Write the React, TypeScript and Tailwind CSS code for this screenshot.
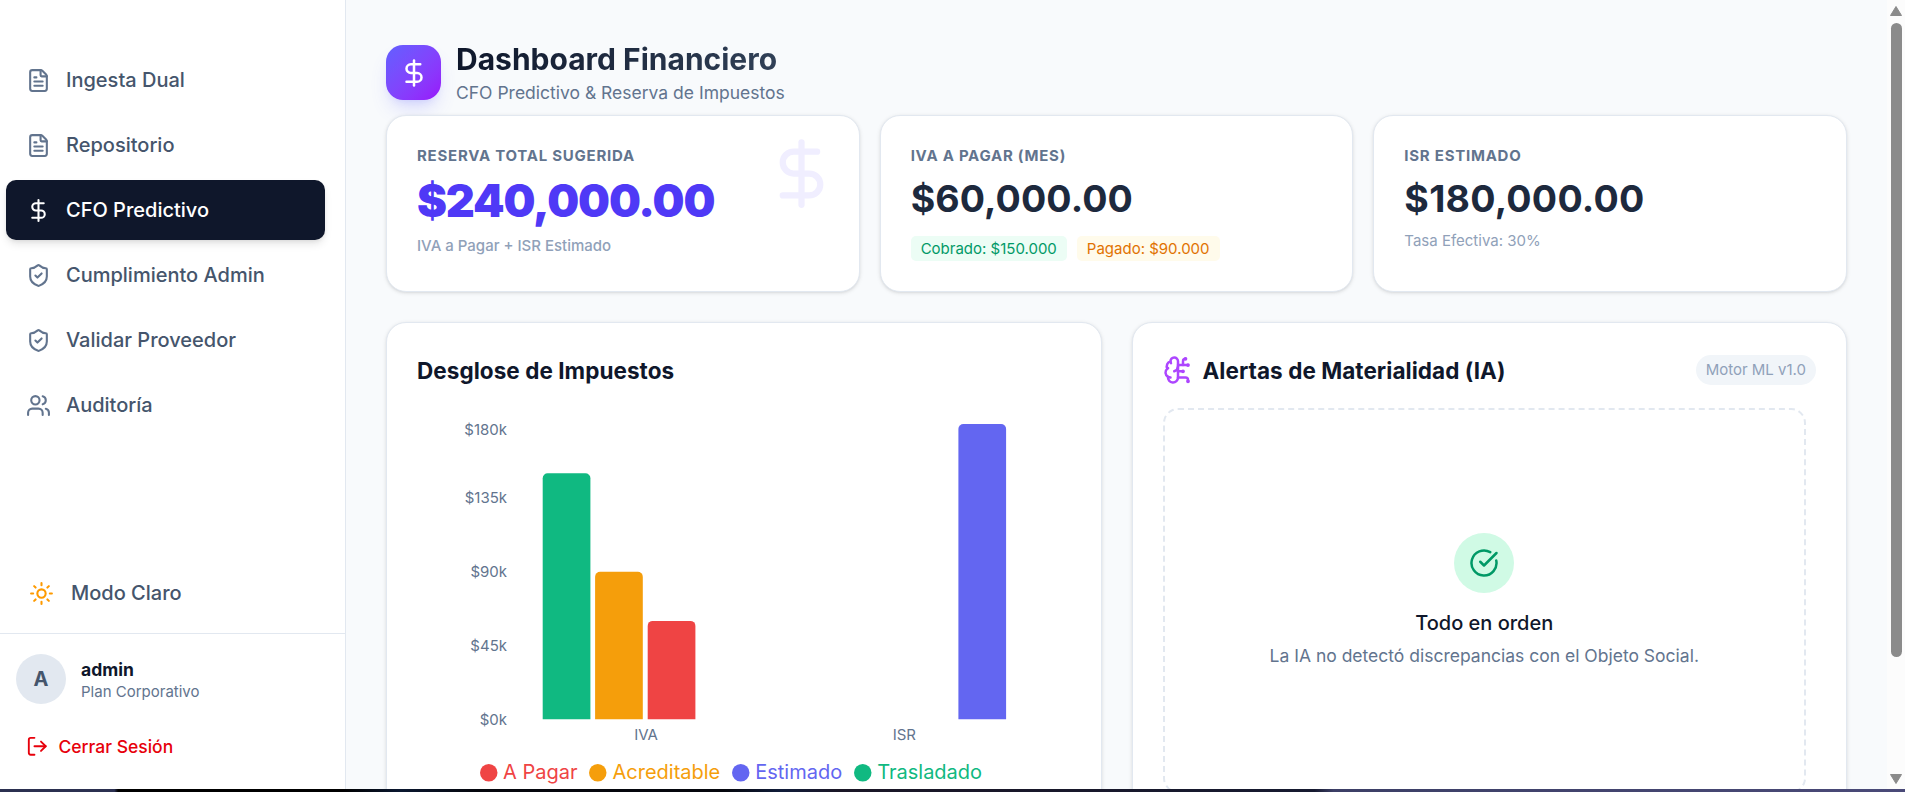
import React from "react";
import {
  BrainCircuit,
  CircleCheckBig,
  DollarSign,
  FileText,
  LogOut,
  ShieldCheck,
  Sun,
  Users,
} from "lucide-react";

const navItems = [
  { label: "Ingesta Dual", icon: FileText, active: false },
  { label: "Repositorio", icon: FileText, active: false },
  { label: "CFO Predictivo", icon: DollarSign, active: true },
  { label: "Cumplimiento Admin", icon: ShieldCheck, active: false },
  { label: "Validar Proveedor", icon: ShieldCheck, active: false },
  { label: "Auditoría", icon: Users, active: false },
];

const bars = [
  { x: 125.7, value: 150, color: "#10b981" },
  { x: 178.1, value: 90, color: "#f59e0b" },
  { x: 230.7, value: 60, color: "#ef4444" },
  { x: 541.4, value: 180, color: "#6366f1" },
];

const yTicks = [
  { label: "$180k", y: 26 },
  { label: "$135k", y: 94 },
  { label: "$90k", y: 168 },
  { label: "$45k", y: 242 },
  { label: "$0k", y: 316 },
];

const legend = [
  { label: "A Pagar", color: "text-[#ef4444]" },
  { label: "Acreditable", color: "text-[#f59e0b]" },
  { label: "Estimado", color: "text-[#6366f1]" },
  { label: "Trasladado", color: "text-[#10b981]" },
];

const card =
  "bg-white border border-slate-200 rounded-[20px] shadow-[0_1px_4px_rgba(0,0,0,0.1),0_1px_3px_-1px_rgba(0,0,0,0.1)]";

const Sidebar = () => (
  <aside className="w-[346px] shrink-0 h-full bg-white border-r border-slate-200 flex flex-col justify-between">
    <nav className="pt-[50px] pl-1.5 pr-5 flex flex-col gap-[5px]">
      {navItems.map((item) => (
        <a
          key={item.label}
          className={`h-[60px] px-5 flex items-center gap-[15px] rounded-[10px] text-[20px] font-medium ${
            item.active
              ? "bg-slate-900 text-white shadow-[0_5px_8px_-1px_rgba(0,0,0,0.1),0_2px_5px_-2px_rgba(0,0,0,0.1)]"
              : "text-slate-600"
          }`}
        >
          <item.icon
            size={25}
            className={item.active ? "text-white" : "text-slate-500"}
          />
          {item.label}
        </a>
      ))}
    </nav>

    <div>
      <button className="flex items-center gap-[17px] pl-[29px] pb-[27px] text-[20px] leading-[25px] font-medium text-slate-600">
        <Sun size={25} className="text-[#fe9a00]" />
        Modo Claro
      </button>
      <div className="border-t border-slate-200 h-[156px] pt-5 px-4">
        <div className="flex items-center gap-[15px]">
          <div className="size-[50px] rounded-full bg-slate-200 flex items-center justify-center text-[20px] font-bold text-slate-600">
            A
          </div>
          <div>
            <p className="text-[17.5px] leading-[25px] font-bold text-slate-900">
              admin
            </p>
            <p className="text-[15px] leading-5 text-slate-500">
              Plan Corporativo
            </p>
          </div>
        </div>
        <button className="mt-[30px] ml-2.5 flex items-center gap-2.5 text-[17.5px] leading-[25px] font-medium text-[#e7000b]">
          <LogOut size={22.5} />
          Cerrar Sesión
        </button>
      </div>
    </div>
  </aside>
);

const TaxChart = () => (
  <svg width="654" height="360" className="block">
    {yTicks.map((tick) => (
      <text
        key={tick.label}
        x="90"
        y={tick.y + 5.5}
        textAnchor="end"
        className="text-[15px] fill-slate-500"
      >
        {tick.label}
      </text>
    ))}
    {bars.map((bar) => {
      const top = 316.3 - bar.value * 1.64;
      return (
        <path
          key={bar.color}
          d={`M${bar.x} 316.3V${top + 5}a5 5 0 0 1 5 -5h37.7a5 5 0 0 1 5 5V316.3Z`}
          fill={bar.color}
        />
      );
    })}
    <text x="229" y="336.5" textAnchor="middle" className="text-[15px] fill-slate-500">
      IVA
    </text>
    <text x="487.3" y="336.5" textAnchor="middle" className="text-[15px] fill-slate-500">
      ISR
    </text>
  </svg>
);

const App = () => {
  return (
    <div className="h-[792px] w-full overflow-hidden flex flex-col font-[Inter,sans-serif] bg-slate-50">
      <div className="h-[789px] flex overflow-hidden">
        <Sidebar />

        <main className="flex-1 min-w-0 pt-[39px] px-10">
          {/* Header */}
          <header className="flex gap-[15px] h-[76px]">
            <div className="size-[55px] mt-1.5 rounded-[17px] bg-linear-to-br from-[#615fff] to-[#9810fa] flex items-center justify-center text-white shadow-[0_12px_19px_-4px_rgba(97,95,255,0.2),0_5px_8px_-5px_rgba(97,95,255,0.2)]">
              <DollarSign size={30} />
            </div>
            <div>
              <h1 className="text-[30px] leading-10 font-bold bg-linear-to-r from-slate-900 to-slate-700 bg-clip-text text-transparent">
                Dashboard Financiero
              </h1>
              <p className="mt-px text-[17.5px] leading-[25px] text-slate-500">
                CFO Predictivo & Reserva de Impuestos
              </p>
            </div>
          </header>

          {/* KPI cards */}
          <div className="grid grid-cols-3 gap-5 h-[177px]">
            <div className={`${card} relative p-[30px]`}>
              <DollarSign
                size={75}
                className="absolute top-5 right-5 text-[#f0eeff]"
              />
              <p className="text-[15px] leading-5 font-bold tracking-[0.05em] text-slate-500">
                RESERVA TOTAL SUGERIDA
              </p>
              <p className="relative mt-2.5 text-[45px] leading-[50px] font-black tracking-tight text-[#4f39f6]">
                $240,000.00
              </p>
              <p className="mt-2.5 text-[15px] leading-5 font-medium text-slate-400">
                IVA a Pagar + ISR Estimado
              </p>
            </div>

            <div className={`${card} p-[30px]`}>
              <p className="text-[15px] leading-5 font-bold tracking-[0.05em] text-slate-500">
                IVA A PAGAR (MES)
              </p>
              <p className="mt-2.5 text-[37.5px] leading-[45px] font-bold tracking-[0.1px] text-slate-800">
                $60,000.00
              </p>
              <div className="mt-[15px] flex gap-2.5 text-[15px] leading-5">
                <span className="px-2.5 py-[2.5px] rounded-[5px] bg-emerald-50 text-emerald-600">
                  Cobrado: $150.000
                </span>
                <span className="px-2.5 py-[2.5px] rounded-[5px] bg-amber-50 text-amber-600">
                  Pagado: $90.000
                </span>
              </div>
            </div>

            <div className={`${card} p-[30px]`}>
              <p className="text-[15px] leading-5 font-bold tracking-[0.05em] text-slate-500">
                ISR ESTIMADO
              </p>
              <p className="mt-2.5 text-[37.5px] leading-[45px] font-bold tracking-[0.25px] text-slate-800">
                $180,000.00
              </p>
              <p className="mt-2.5 text-[15px] leading-5 text-slate-400">
                Tasa Efectiva: 30%
              </p>
            </div>
          </div>

          {/* Chart and alerts */}
          <div className="mt-[30px] grid grid-cols-2 gap-[30px]">
            <div className={`${card} p-[30px] h-[560px]`}>
              <h3 className="text-[22.5px] leading-[35px] font-bold tracking-[0.05px] text-slate-900">
                Desglose de Impuestos
              </h3>
              <div className="mt-[15px]">
                <TaxChart />
                <div className="-mt-1 pl-[63px] flex text-[20px] leading-[30px]">
                  {legend.map((item) => (
                    <span
                      key={item.label}
                      className={`mr-3 flex items-center gap-[5.5px] ${item.color}`}
                    >
                      <svg width="17.5" height="17.5" viewBox="0 0 14 14">
                        <circle cx="7" cy="7" r="7" fill="currentColor" />
                      </svg>
                      <span className="-mt-0.5">{item.label}</span>
                    </span>
                  ))}
                </div>
              </div>
            </div>

            <div className={`${card} p-[30px] h-[560px]`}>
              <div className="flex items-center justify-between">
                <h3 className="flex items-center gap-2.5 text-[22.5px] leading-[35px] font-bold tracking-[0.05px] text-slate-900">
                  <BrainCircuit size={30} className="-mt-0.5 text-[#ad46ff]" />
                  Alertas de Materialidad (IA)
                </h3>
                <span className="-mt-0.5 px-2.5 py-[5px] rounded-full bg-slate-100 text-[15px] leading-5 text-slate-400">
                  Motor ML v1.0
                </span>
              </div>
              <div className="mt-5 mr-2.5 h-[385px] rounded-[15px] border-2 border-dashed border-slate-200 flex flex-col items-center justify-center">
                <div className="size-[60px] rounded-full bg-[#d0fae5] flex items-center justify-center text-[#009966]">
                  <CircleCheckBig size={30} />
                </div>
                <p className="mt-[15px] text-[20px] leading-[30px] font-medium text-slate-900">
                  Todo en orden
                </p>
                <p className="mt-[5px] text-[17.5px] leading-[25px] text-slate-500">
                  La IA no detectó discrepancias con el Objeto Social.
                </p>
              </div>
            </div>
          </div>
        </main>

        {/* Scrollbar */}
        <div className="w-[18px] shrink-0 bg-[#fcfcfc] flex flex-col items-center pt-1.5 pb-[5px]">
          <svg width="12" height="10" viewBox="0 0 12 10" fill="#8b8b8b">
            <path d="M6 0.5 11.5 9.5H0.5Z" stroke="#8b8b8b" strokeLinejoin="round" />
          </svg>
          <div className="mt-[7px] w-[11px] h-[634px] rounded-full bg-[#8b8b8b]" />
          <svg width="12" height="10" viewBox="0 0 12 10" fill="#8b8b8b" className="mt-auto">
            <path d="M6 9.5 11.5 0.5H0.5Z" stroke="#8b8b8b" strokeLinejoin="round" />
          </svg>
        </div>
      </div>
      <div className="h-[3px] bg-[linear-gradient(90deg,#2b3050_0%,#2b3050_6%,#000_6.2%,#000_18%,#0a1730_21%,#05070d_25%,#05070d_38%,#101c3a_41%,#1a1626_44%,#161a30_69%,#3c3f66_70%,#4a4a78_100%)]" />
    </div>
  );
};

export default App;
